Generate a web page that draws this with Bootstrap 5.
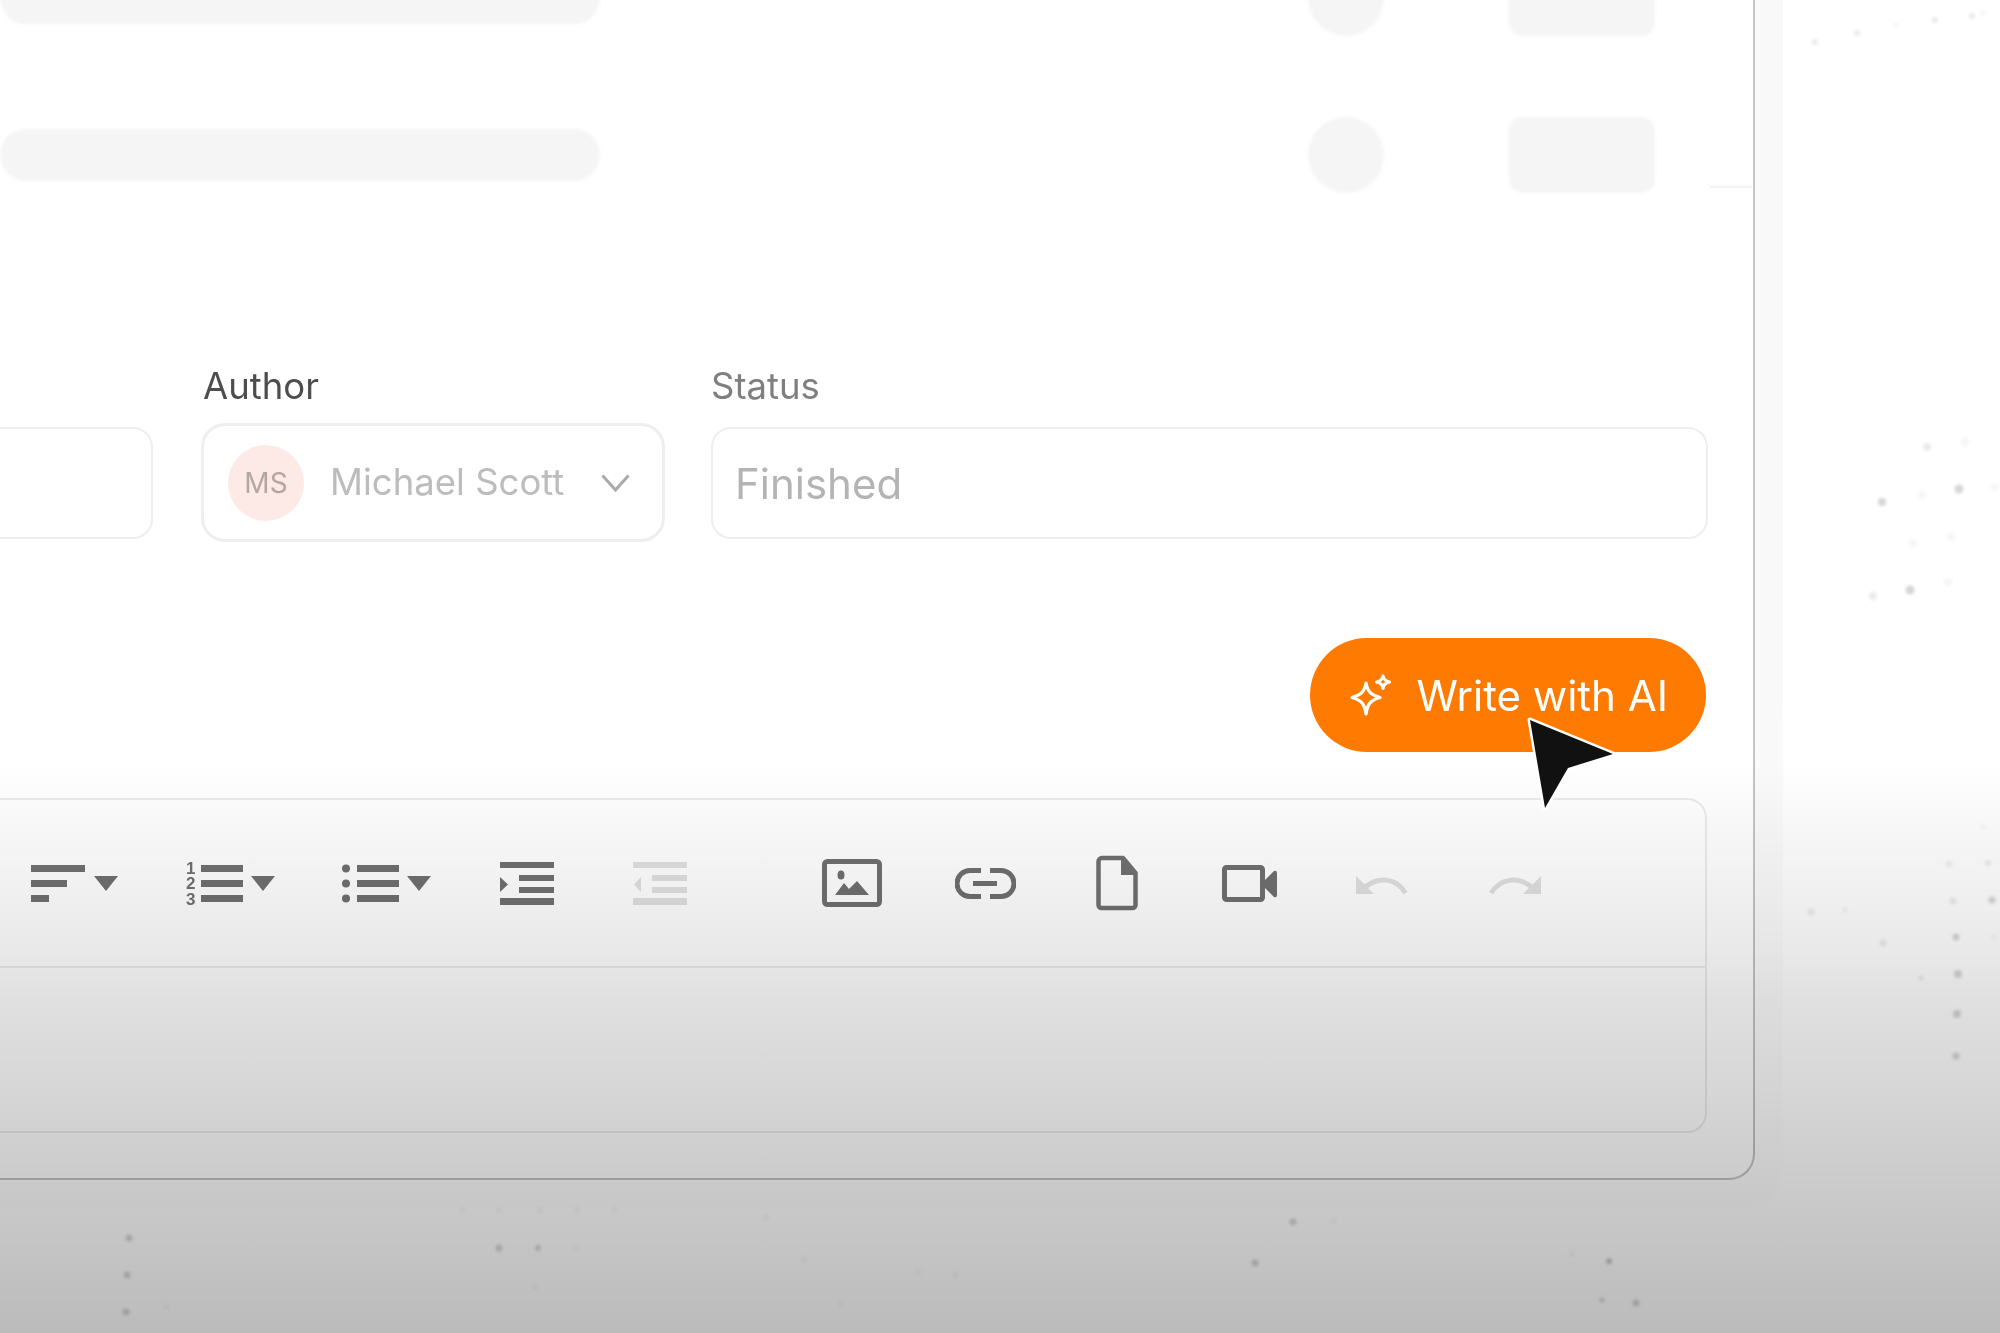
<!DOCTYPE html>
<html lang="en">
<head>
    <meta charset="UTF-8">
    <meta name="viewport" content="width=device-width, initial-scale=1.0">
    <title>Write with AI</title>
    <link href="https://cdn.jsdelivr.net/npm/bootstrap@5.3.3/dist/css/bootstrap.min.css" rel="stylesheet">
    <style>
        body {
            width: 2000px;
            height: 1333px;
            overflow: hidden;
            background: #fff;
            font-family: Inter, "Liberation Sans", sans-serif;
        }

        /* scattered dots behind the window */
        .dot-layer {
            position: absolute;
            inset: 0;
            filter: blur(1.4px);
        }
        .dot-layer .d1 { fill: #000; opacity: .16; }
        .dot-layer .d2 { fill: #000; opacity: .08; }
        .dot-layer .d3 { fill: #000; opacity: .035; }

        .app-window {
            position: relative;
            width: 1755px;
            height: 1180px;
            padding-right: 45px;
            overflow: hidden;
            background: #fff;
            border-right: 2px solid #c4c4c4;
            border-bottom: 2px solid #c4c4c4;
            border-bottom-right-radius: 26px;
            filter: blur(.5px);
        }
        .window-halo {
            position: absolute;
            left: 0;
            top: 0;
            width: 1783px;
            height: 1208px;
            border-bottom-right-radius: 40px;
            background: linear-gradient(to bottom, rgba(0, 0, 0, .024), rgba(0, 0, 0, .024) 700px, rgba(0, 0, 0, .006));
        }

        /* blurred list rows at the top */
        .skel-row { height: 76px; margin-right: -45px; }
        .skel-first { margin-top: -40px; margin-bottom: 81px; }
        .skel-bar { width: 600px; height: 52px; border-radius: 26px; background: #f5f5f5; filter: blur(1.5px); }
        .skel-dot { width: 76px; height: 76px; margin-left: 708px; border-radius: 50%; background: #f5f5f5; filter: blur(1.5px); }
        .skel-pill { width: 146px; height: 76px; margin-left: 125px; border-radius: 14px; background: #f5f5f5; filter: blur(1.5px); }
        .skel-line { width: 42px; height: 2px; margin: 0 0 5px 55px; background: #f3f3f3; }

        .form-line { margin-top: 172px; }
        .field-label { margin-bottom: 16px; font-size: 36.5px; line-height: 42px; color: #7f7f7f; }
        .label-dark { padding-left: 2px; color: #4d4d4d; }
        .field-box.form-control {
            height: 112px;
            margin-top: 20px;
            padding: 0 22px;
            font-size: 42px;
            color: #b4b4b4;
            border: 2px solid #eeeeee;
            border-radius: 20px;
            box-shadow: none;
        }
        .col-cut { width: 183px; margin-left: -30px; margin-right: 48px; }
        .col-author { width: 464px; margin-right: 46px; }
        .author-box.form-control {
            height: 119px;
            padding: 0 32px 0 24px;
            font-size: 36.5px;
            color: #bcbcbc;
            border: 3px solid #eeeeee;
            border-radius: 24px;
        }
        .ms-avatar {
            width: 76px;
            height: 76px;
            margin-right: 26px;
            font-size: 28px;
            color: #b3a6a3;
            background: #fde9e6;
        }

        .ai-btn.btn {
            height: 114px;
            margin: 96px 2px 0 auto;
            padding: 0 38px 0 40px;
            gap: 25px;
            font-size: 42px;
            font-weight: 400;
            color: #fff;
            background: #ff7a00;
            border: 0;
            border-radius: 57px;
        }

        .editor-box {
            height: 335px;
            margin: 46px 1px 0 -30px;
            background: #fff;
            border: 2px solid #ebebeb;
            border-radius: 20px;
        }
        .editor-tools { height: 168px; border-bottom: 2px solid #ececec; }
        .editor-tools svg { flex: none; height: 56px; }
        .tool-on { fill: #707070; color: #707070; }
        .tool-off { fill: #e0e0e0; color: #e0e0e0; }
        .tool-digit { font: 700 17px "Liberation Sans", sans-serif; }
        .t-sort { margin-left: 59px; }
        .t-ordered { margin-left: 68px; }
        .t-bullet { margin-left: 67px; }
        .t-indent { margin-left: 69px; }
        .t-outdent { margin-left: 79px; }
        .t-image { margin-left: 135px; }
        .t-link { margin-left: 73px; }
        .t-file { margin-left: 80px; }
        .t-video { margin-left: 84px; }
        .t-undo { margin-left: 79px; }
        .t-redo { margin-left: 80px; }

        /* the grey fade over the lower part of the frame */
        .fade-over {
            position: absolute;
            inset: 0;
            pointer-events: none;
            background: linear-gradient(to bottom,
                rgba(0, 0, 0, 0) 760px,
                rgba(0, 0, 0, .027) 820px,
                rgba(0, 0, 0, .085) 950px,
                rgba(0, 0, 0, .12) 1000px,
                rgba(0, 0, 0, .165) 1100px,
                rgba(0, 0, 0, .21) 1200px,
                rgba(0, 0, 0, .267) 1333px);
        }
        .mouse-arrow { position: absolute; left: 1515px; top: 705px; }
    </style>
</head>
<body class="position-relative">
    <svg class="dot-layer" width="2000" height="1333" aria-hidden="true">
        <g class="d2">
            <circle cx="1815" cy="42" r="3"/><circle cx="1857" cy="33" r="3"/><circle cx="1935" cy="20" r="3"/><circle cx="1972" cy="16" r="3"/>
            <circle cx="1927" cy="447" r="4"/><circle cx="1873" cy="596" r="4"/><circle cx="1811" cy="912" r="3.5"/><circle cx="1949" cy="864" r="3"/><circle cx="1988" cy="863" r="3"/><circle cx="1953" cy="901" r="3.5"/><circle cx="1883" cy="943" r="3.5"/><circle cx="1921" cy="978" r="2.5"/><circle cx="1609" cy="1262" r="3"/>
        </g>
        <g class="d1">
            <circle cx="1882" cy="502" r="4"/><circle cx="1959" cy="489" r="4.5"/><circle cx="1910" cy="590" r="4.5"/><circle cx="1992" cy="900" r="3.5"/><circle cx="1956" cy="937" r="3.5"/><circle cx="1958" cy="974" r="4"/><circle cx="1957" cy="1014" r="4"/><circle cx="1956" cy="1056" r="3.5"/>
            <circle cx="129" cy="1238" r="3.5"/><circle cx="127" cy="1275" r="3.5"/><circle cx="126" cy="1312" r="3.5"/><circle cx="499" cy="1248" r="3.5"/><circle cx="538" cy="1248" r="3"/><circle cx="1293" cy="1222" r="3.5"/><circle cx="1255" cy="1263" r="3.5"/><circle cx="1609" cy="1261" r="3"/><circle cx="1636" cy="1303" r="3.5"/><circle cx="1602" cy="1300" r="2.5"/>
        </g>
        <g class="d3">
            <circle cx="1896" cy="25" r="3"/><circle cx="1983" cy="13" r="3"/><circle cx="1965" cy="442" r="4"/><circle cx="1922" cy="495" r="4"/><circle cx="1995" cy="487" r="4"/><circle cx="1913" cy="543" r="4"/><circle cx="1951" cy="537" r="4"/><circle cx="1948" cy="582" r="4"/><circle cx="1983" cy="827" r="3"/><circle cx="1845" cy="910" r="3"/><circle cx="1994" cy="937" r="3"/><circle cx="1333" cy="1221" r="3.5"/><circle cx="918" cy="1272" r="3"/><circle cx="955" cy="1275" r="3"/><circle cx="1572" cy="1254" r="3"/><circle cx="462" cy="1210" r="3"/><circle cx="499" cy="1210" r="3"/><circle cx="540" cy="1210" r="3"/><circle cx="577" cy="1210" r="3"/><circle cx="614" cy="1210" r="3"/><circle cx="766" cy="1218" r="3"/><circle cx="576" cy="1248" r="3"/><circle cx="804" cy="1260" r="3"/><circle cx="841" cy="1304" r="3"/><circle cx="535" cy="1287" r="3"/><circle cx="166" cy="1307" r="3"/>
        </g>
    </svg>

    <div class="window-halo"></div>

    <div class="app-window d-flex flex-column">
        <div class="skel-row skel-first d-flex align-items-center">
            <div class="skel-bar"></div>
            <div class="skel-dot"></div>
            <div class="skel-pill"></div>
        </div>
        <div class="skel-row d-flex align-items-center">
            <div class="skel-bar"></div>
            <div class="skel-dot"></div>
            <div class="skel-pill"></div>
            <div class="skel-line align-self-end"></div>
        </div>

        <form class="form-line d-flex">
            <div class="col-cut">
                <div class="field-label">&nbsp;</div>
                <input class="field-box form-control" type="text">
            </div>
            <div class="col-author">
                <div class="field-label label-dark">Author</div>
                <div class="author-box form-control d-flex align-items-center">
                    <span class="ms-avatar rounded-circle d-flex align-items-center justify-content-center flex-shrink-0">MS</span>
                    <span class="flex-grow-1 text-nowrap">Michael Scott</span>
                    <svg width="29" height="18" viewBox="0 0 29 18" fill="none" stroke="#a9a9a9" stroke-width="3"><path d="M1.5 1.5 L14.5 16 L27.5 1.5"/></svg>
                </div>
            </div>
            <div class="flex-grow-1">
                <div class="field-label">Status</div>
                <input class="field-box form-control" type="text" value="Finished" readonly>
            </div>
        </form>

        <button type="button" class="ai-btn btn d-flex align-items-center">
            <svg width="42" height="42" viewBox="0 0 42 42" fill="none" stroke="#fff" stroke-width="3.2" stroke-linejoin="round">
                <path d="M16 9 C17.5 17 20 20.5 30 23.5 C20 26.5 17.5 30 16 40 C14.5 30 12 26.5 2 23.5 C12 20.5 14.5 17 16 9 Z"/>
                <path d="M33 2 C33.8 5.5 35 6.8 39.5 8 C35 9.2 33.8 10.5 33 14.5 C32.2 10.5 31 9.2 26.5 8 C31 6.8 32.2 5.5 33 2 Z"/>
            </svg>
            <span>Write with AI</span>
        </button>

        <div class="editor-box">
            <div class="editor-tools d-flex align-items-center">
                <svg class="t-sort tool-on" width="87" viewBox="0 0 87 56">
                    <rect y="10" width="54" height="7"/><rect y="25" width="36" height="7"/><rect y="40" width="18" height="7"/>
                    <path d="M63 21 H87 L75 36 Z"/>
                </svg>
                <svg class="t-ordered tool-on" width="89" viewBox="0 0 89 56">
                    <text class="tool-digit" x="0" y="19">1</text><text class="tool-digit" x="0" y="34">2</text><text class="tool-digit" x="0" y="50">3</text>
                    <rect x="15" y="10" width="42" height="7"/><rect x="15" y="25" width="42" height="7"/><rect x="15" y="40" width="42" height="7"/>
                    <path d="M65 21 H89 L77 36 Z"/>
                </svg>
                <svg class="t-bullet tool-on" width="89" viewBox="0 0 89 56">
                    <circle cx="4" cy="13.5" r="4"/><circle cx="4" cy="28.5" r="4"/><circle cx="4" cy="43.5" r="4"/>
                    <rect x="15" y="10" width="42" height="7"/><rect x="15" y="25" width="42" height="7"/><rect x="15" y="40" width="42" height="7"/>
                    <path d="M65 21 H89 L77 36 Z"/>
                </svg>
                <svg class="t-indent tool-on" width="54" viewBox="0 0 54 56">
                    <rect y="7" width="54" height="6"/><rect x="19" y="20" width="35" height="6"/><rect x="19" y="32" width="35" height="6"/><rect y="43" width="54" height="7"/>
                    <path d="M0 22 L8 29.5 L0 37 Z"/>
                </svg>
                <svg class="t-outdent tool-off" width="54" viewBox="0 0 54 56">
                    <rect y="7" width="54" height="6"/><rect x="19" y="20" width="35" height="6"/><rect x="19" y="32" width="35" height="6"/><rect y="43" width="54" height="7"/>
                    <path d="M8 22 L1 29.5 L8 37 Z"/>
                </svg>
                <svg class="t-image tool-on" width="60" viewBox="0 0 60 56">
                    <rect x="2.5" y="6.5" width="55" height="43" rx="3" fill="none" stroke="currentColor" stroke-width="5"/>
                    <ellipse cx="19" cy="20" rx="3.5" ry="4.5"/>
                    <path d="M13 40 L22 28 L27 34 L35 26 L47 40 Z"/>
                </svg>
                <svg class="t-link tool-on" width="61" viewBox="0 0 61 56">
                    <path d="M26 15.5 H15 a13 13 0 0 0 0 26 H26 M35 15.5 H46 a13 13 0 0 1 0 26 H35" fill="none" stroke="currentColor" stroke-width="5"/>
                    <rect x="18" y="26" width="24" height="5"/>
                </svg>
                <svg class="t-file tool-on" width="42" viewBox="0 0 42 56">
                    <path d="M6 3 H27 L39.5 18 V50 a3 3 0 0 1 -3 3 H5.5 a3 3 0 0 1 -3 -3 V6.5 a3.5 3.5 0 0 1 3.5 -3.5 Z" fill="none" stroke="currentColor" stroke-width="4.5" stroke-linejoin="round"/>
                    <path d="M25 3 L40 20 H25 Z"/>
                </svg>
                <svg class="t-video tool-on" width="55" viewBox="0 0 55 56">
                    <rect x="2.5" y="12.5" width="38" height="32" rx="2" fill="none" stroke="currentColor" stroke-width="5"/>
                    <path d="M43 25 L52 16 Q55 15 55 18 V40 Q55 43 52 42 L43 33 Z"/>
                </svg>
                <svg class="t-undo tool-off" width="52" viewBox="0 0 52 56">
                    <path d="M49.5 38 C41 24 24 20 8 33" fill="none" stroke="currentColor" stroke-width="5"/>
                    <path d="M0 21 V39 H18 Z"/>
                </svg>
                <svg class="t-redo tool-off" width="53" viewBox="0 0 53 56">
                    <path d="M3 38 C12 24 29 20 45 33" fill="none" stroke="currentColor" stroke-width="5"/>
                    <path d="M53 21 V39 H35 Z"/>
                </svg>
            </div>
        </div>
    </div>

    <div class="fade-over"></div>

    <svg class="mouse-arrow" width="110" height="110" viewBox="0 0 110 110" aria-hidden="true">
        <path d="M15 15 L98 49 L53 63 L30 103 Z" fill="#111" stroke="#fff" stroke-width="5" stroke-linejoin="round" paint-order="stroke"/>
    </svg>

    <script src="https://cdn.jsdelivr.net/npm/bootstrap@5.3.3/dist/js/bootstrap.bundle.min.js"></script>
</body>
</html>
